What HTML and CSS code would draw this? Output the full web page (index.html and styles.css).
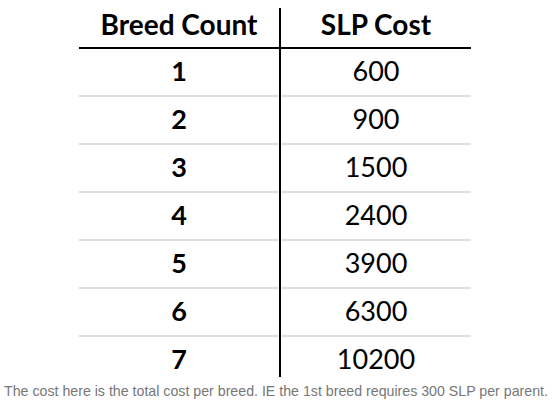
FILE: index.html
```html
<!DOCTYPE html>
<html>
<head>
<meta charset="utf-8">
<link rel="stylesheet" href="styles.css">
</head>
<body>
<div class="page">
  <div class="table">
    <div class="divider"></div>
    <div class="cell head">Breed Count</div>
    <div class="cell head">SLP Cost</div>
    <div class="cell num bold">1</div><div class="cell num">600</div>
    <div class="cell num bold">2</div><div class="cell num">900</div>
    <div class="cell num bold">3</div><div class="cell num">1500</div>
    <div class="cell num bold">4</div><div class="cell num">2400</div>
    <div class="cell num bold">5</div><div class="cell num">3900</div>
    <div class="cell num bold">6</div><div class="cell num">6300</div>
    <div class="cell num bold last">7</div><div class="cell num last">10200</div>
  </div>
  <p class="caption">The cost here is the total cost per breed. IE the 1st breed requires 300 SLP per parent.</p>
</div>
</body>
</html>
```
FILE: styles.css
```css
html, body {
  margin: 0;
  padding: 0;
  background: #fff;
}
.page {
  width: 552px;
  height: 405px;
  padding-top: 8px;
  box-sizing: border-box;
}
.table {
  display: grid;
  grid-template-columns: 200px 2px 190px;
  margin-left: 79px;
  width: 392px;
  font-family: Lato, "Open Sans", sans-serif;
  color: #000;
}
.divider {
  grid-column: 2;
  grid-row: 1 / span 8;
  background: #000;
}
.cell {
  text-align: center;
  box-sizing: border-box;
}
.head {
  height: 41px;
  font-weight: 700;
  font-size: 28px;
  line-height: 32px;
  border-bottom: 2px solid #000;
}
.num {
  height: 48px;
  font-size: 27px;
  line-height: 43px;
  border-bottom: 2px solid #dedede;
}
.bold {
  font-weight: 700;
}
.num.last {
  height: 40px;
  border-bottom: none;
}
.caption {
  margin: 6px 0 0;
  text-align: center;
  font-family: "Liberation Sans", Arial, sans-serif;
  font-size: 14.2px;
  color: #777;
  line-height: 16px;
  white-space: nowrap;
}
```
